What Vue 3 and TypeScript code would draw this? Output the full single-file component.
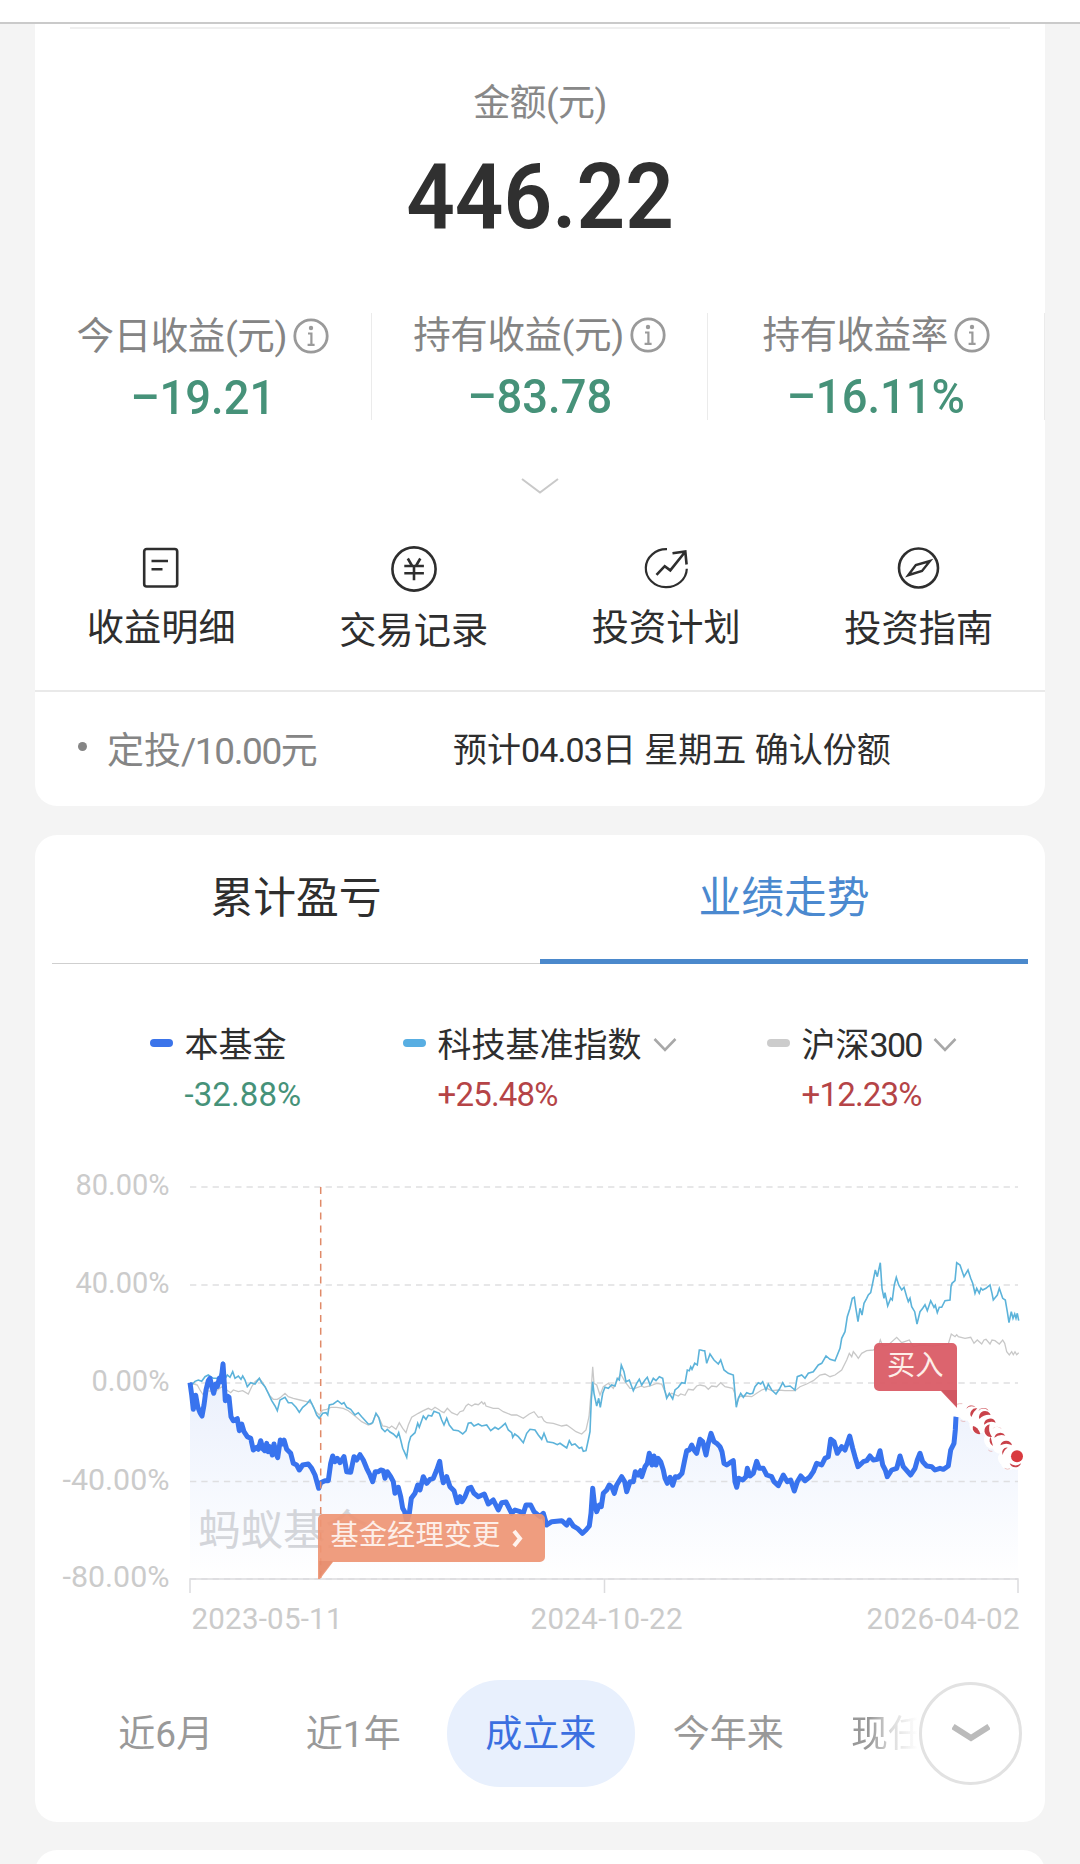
<script setup lang="ts">
import { ref } from 'vue'

interface Stat { label: string; value: string; shift: number }
interface Tool { label: string; icon: string; drop: number }
interface Legend { name: string; digits: string; change: string; color: string; tone: string; menu: boolean; left: number }
interface Segment { x: number; y: number; points: string }

const stats: Stat[] = [
  { label: '今日收益(元)', value: '–19.21', shift: 0 },
  { label: '持有收益(元)', value: '–83.78', shift: -1 },
  { label: '持有收益率', value: '–16.11%', shift: -1 },
]

const tools: Tool[] = [
  { label: '收益明细', icon: 'bill', drop: 0 },
  { label: '交易记录', icon: 'yen', drop: 3 },
  { label: '投资计划', icon: 'plan', drop: 0 },
  { label: '投资指南', icon: 'guide', drop: 1 },
]

const tabs = ['累计盈亏', '业绩走势']
const activeTab = ref(1)

const legends: Legend[] = [
  { name: '本基金', digits: '', change: '-32.88%', color: '#3b74ea', tone: 'down', menu: false, left: 115 },
  { name: '科技基准指数', digits: '', change: '+25.48%', color: '#58aee2', tone: 'up', menu: true, left: 368 },
  { name: '沪深', digits: '300', change: '+12.23%', color: '#cccccc', tone: 'up', menu: true, left: 732 },
]

const ranges = ['近6月', '近1年', '成立来', '今年来', '现任']
const activeRange = ref(2)

const axis = [
  { label: '80.00%', y: 1187, width: 94 },
  { label: '40.00%', y: 1285, width: 94 },
  { label: '0.00%', y: 1383, width: 78 },
  { label: '-40.00%', y: 1481.5, width: 107 },
  { label: '-80.00%', y: 1579, width: 107 },
]

// Series points are in thirds of a pixel, relative to each segment's origin.
const fund: Segment[] = [
  { x: 120, y: 3480, points: '450,668 455,705 460,748 467,706 473,740 480,758 486,768 492,735 498,690 505,662 510,655 516,682 521,700 527,672 532,680 538,655 543,665 549,612 553,670 556,722 562,708 567,712 573,770 580,782 592,776 598,812 605,792 612,815 622,830 632,835 640,870 650,862 655,868 662,842 668,866 674,872 680,850 684,875 690,860 697,885 702,852 708,880 713,893 721,840 727,852 732,840 740,868 752,880 760,910 770,915 778,930 788,915 805,912 815,925 825,945 836,985 842,968 855,962 865,962 872,910 878,888 885,905 892,895 900,908 912,890 920,935 932,937 942,890 950,900 960,884 970,900 980,925 990,945 998,965 1006,935' },
  { x: 1110, y: 3900, points: '25,515 32,510 40,512 45,535 52,515 62,530 70,545 75,580 85,562 92,590 98,625 104,635 110,665 118,640 124,595 135,580 143,555 150,570 160,530 170,550 180,538 190,535 200,510 209,484 214,520 220,548 230,530 240,560 252,572 262,608 270,590 276,605 285,590 295,565 303,562 312,580 325,590 343,582 355,612 370,600 385,630 395,608 408,606 425,640 435,630 450,635 460,640 468,615 482,615 492,635 510,650 520,640 530,675 545,665 575,662 590,675 598,660 610,678 622,685 637,700 648,690 658,678 663,640 668,565 673,610 680,635 688,615 694,620 700,580 710,570 718,555 726,562 733,580 740,555 755,530 764,545 770,575 780,545 790,545 796,515 805,525 812,512 815,530 825,500 832,490 838,460 846,495 852,468 858,495 864,475 872,485 880,510 885,535 892,550 900,532 908,556 916,530 925,532 936,520 944,480 950,452 958,450 965,435 972,450 980,460 990,418 998,425 1008,465 1015,430' },
  { x: 2100, y: 3660, points: '33,640 42,665 50,670 60,680 66,695 72,730 80,735 90,728 100,722 105,785 110,802 116,775 128,780 138,770 142,745 150,768 160,760 170,724 178,745 190,745 200,765 215,770 222,785 235,797 250,765 262,785 272,780 283,813 292,785 302,768 315,782 330,770 340,755 350,730 365,735 375,715 385,710 392,658 402,665 412,700 425,680 435,690 449,648 458,685 465,710 474,740 490,725 500,722 510,708 520,720 532,718 540,692 548,735 556,750 562,770 575,750 590,745 600,708 610,740 632,765 645,745 652,720 660,700 668,725 680,738 695,740 705,750 720,745 730,748 745,738 752,690 762,670 766,630 768,590' },
]

const benchmark: Segment[] = [
  { x: 120, y: 3480, points: '450,668 458,672 465,664 475,660 485,664 495,650 505,645 520,655 535,655 542,640 549,605 556,655 562,645 570,652 578,635 585,655 595,648 603,658 608,648 615,660 622,680 632,668 645,672 658,655 665,668 675,680 685,700 695,722 705,738 712,752 720,720 735,712 745,728 755,728 768,742 778,757 788,742 800,732 810,720 822,745 830,765 838,775 848,760 858,758 863,765 868,735 880,732 893,722 905,732 912,728 920,742 932,748 945,765 955,758 965,770 985,792' },
  { x: 1110, y: 3900, points: '0,372 8,368 18,340 26,352 35,385 45,395 52,388 60,396 70,402 80,412 86,398 92,420 98,445 104,458 110,472 116,430 122,410 135,398 143,370 148,382 160,348 168,358 175,346 185,348 192,334 208,340 215,360 222,375 230,355 238,375 250,390 265,392 278,402 288,392 295,370 303,368 312,378 325,372 335,378 350,375 362,392 375,382 385,388 395,380 406,370 415,390 425,398 428,412 434,402 445,410 460,428 470,400 480,388 495,390 505,405 515,418 522,400 532,425 550,428 562,434 570,430 590,444 598,422 605,435 615,432 628,445 635,442 640,454 648,452 655,420 660,395 664,300 668,245 672,280 680,318 686,295 691,322 698,280 705,262 715,265 725,255 735,258 742,235 748,240 754,195 762,215 768,245 778,240 790,272 800,250 808,238 815,255 825,240 832,232 840,255 850,235 858,242 868,230 878,235 884,270 890,295 898,280 908,297 915,270 925,262 935,248 945,250 952,210 958,212 962,200 966,208 974,190 982,195 988,150' },
  { x: 2100, y: 3660, points: '2,390 10,392 14,392 20,430 30,402 42,420 55,432 62,420 72,450 85,460 100,465 104,510 109,562 115,535 122,520 130,532 140,518 150,522 158,520 165,500 175,488 182,492 188,485 198,510 205,492 215,510 228,522 238,508 248,488 255,500 270,498 285,510 292,470 305,465 315,475 325,460 340,455 355,435 365,430 378,408 390,418 405,422 420,385 425,355 435,335 442,290 450,265 457,235 463,232 467,262 474,305 480,265 486,285 492,250 500,235 505,225 512,218 520,180 526,150 532,170 541,128 546,205 552,235 555,218 563,258 572,235 577,240 583,195 589,172 596,195 605,210 612,202 620,230 625,245 630,235 635,260 644,275 651,312 660,275 668,265 675,254 682,272 692,242 702,262 706,256 712,278 718,262 725,262 735,242 750,240 753,200 756,190 765,182 770,128 780,135 792,170 804,150 812,175 818,190 825,220 830,205 838,220 843,205 848,210 858,205 870,195 876,220 880,240 892,225 898,205 908,235 916,240 922,275 927,308 934,275 939,295 944,282 948,295 952,280 956,302' },
]

const csi300: Segment[] = [
  { x: 120, y: 3480, points: '450,668 460,672 472,675 480,690 490,705 500,692 525,695 545,680 560,690 572,698 580,690 595,695 608,692 625,702 635,680 645,665 658,655 668,668 680,690 690,708 700,718 712,718 722,712 735,700 745,710 760,715 780,720 800,725 815,730 828,755 838,765 848,750 860,748 872,742 890,742 910,745 925,752 945,768 965,785 985,795' },
  { x: 1110, y: 3900, points: '5,372 18,342 28,355 38,378 50,380 58,384 65,378 78,388 88,368 98,385 108,398 115,375 125,352 145,340 160,332 175,325 185,330 195,322 205,328 215,335 222,338 232,325 245,338 262,345 270,335 280,332 288,318 295,312 305,318 315,312 325,314 335,305 340,312 344,308 348,318 370,325 385,325 400,335 425,345 440,345 460,355 478,342 492,335 505,352 515,350 522,362 530,368 550,370 575,378 590,375 600,382 618,395 635,402 648,390 657,350 663,280 668,200 672,250 680,255 690,285 700,260 715,250 730,265 742,240 752,222 765,245 780,265 795,265 815,258 822,262 840,258 860,250 875,252 885,275 892,290 905,280 925,288 932,282 945,286 955,268 970,270 980,258' },
  { x: 2100, y: 3660, points: '0,495 15,498 25,508 35,498 50,500 62,488 75,500 98,505 104,520 109,555 118,530 135,528 155,530 170,520 185,510 200,505 215,512 235,510 255,512 285,512 300,500 320,492 340,482 360,465 375,462 390,470 405,465 425,450 440,420 448,400 455,410 460,395 468,405 475,415 485,400 500,392 520,390 535,378 541,360 548,378 565,375 590,352 605,368 628,360 640,380 660,375 700,378 745,372 754,342 765,350 770,344 775,350 795,355 812,352 822,370 832,360 845,372 852,360 858,358 870,372 876,360 885,362 898,372 908,360 914,370 920,395 928,405 935,395 940,404 945,395 950,404 956,398' },
]

function trace(segments: Segment[]): string {
  return segments
    .flatMap((s) => s.points.split(' ').map((p) => {
      const [x, y] = p.split(',').map(Number)
      return `${((s.x + x) / 3).toFixed(1)},${((s.y + y) / 3).toFixed(1)}`
    }))
    .join(' ')
}

const fundLine = trace(fund)
const benchmarkLine = trace(benchmark)
const csiLine = trace(csi300)
const fundArea = `190,1579 ${fundLine} 980,1408 1018,1457 1018,1579`

// Purchase markers: white rings with the visible slivers of each stacked dot.
const halos = [[88, 92, 20], [108, 100, 22], [128, 92, 20], [132, 112, 22], [145, 134, 27], [163, 102, 21], [170, 128, 24], [182, 150, 24], [188, 180, 26], [204, 158, 25], [212, 195, 26], [230, 205, 24], [226, 235, 22], [236, 248, 23], [258, 245, 24]]

const crescents = [
  'M109 86A17 17 0 0 1 137 82Q121 74 109 86Z',
  'M124 111A17 17 0 0 1 142 85Q129 96 124 111Z',
  'M145 93A18 18 0 0 1 176 92Q159 79 145 93Z',
  'M148 117A18 18 0 0 1 182 105Q164 102 148 117Z',
  'M162 134A18 18 0 0 1 197 128Q178 121 162 134Z',
  'M187 147A18 18 0 0 1 216 148Q202 133 187 147Z',
  'M193 173A18 18 0 0 1 226 167Q208 161 193 173Z',
  'M211 196A18 18 0 0 1 246 196Q229 186 211 196Z',
  'M186 171A19 19 0 0 1 179 133Q173 152 186 171Z',
  'M151 162A19 19 0 0 1 129 138Q143 139 151 162Z',
  'M189 198A19 19 0 0 1 182 170Q185 184 189 198Z',
  'M218 225A15 15 0 0 1 233 203Q221 210 218 225Z',
  'M273 250A18 18 0 0 1 239 250Q257 263 273 250Z',
]
</script>

<template>
  <div class="page">
    <div class="topbar"></div>

    <section class="card holding">
      <div class="hairline"></div>
      <div class="amount-label">金额(元)</div>
      <div class="amount">446.22</div>

      <div class="stats">
        <div v-for="s in stats" :key="s.label" class="stat">
          <div class="stat-label" :style="{ marginTop: s.shift + 'px' }">
            <span>{{ s.label }}</span>
            <svg width="36" height="36" viewBox="0 0 36 36" fill="none">
              <circle cx="18" cy="18" r="16.200" stroke="#9a9a9a" stroke-width="2.800" />
              <circle cx="18" cy="10" r="2.200" fill="#9a9a9a" />
              <path d="M15 15.500h3.400v11M14.600 26.800h7" stroke="#9a9a9a" stroke-width="2.200" />
            </svg>
          </div>
          <div class="stat-value">{{ s.value }}</div>
        </div>
      </div>

      <svg class="more" width="40" height="20" viewBox="0 0 40 20" fill="none">
        <path d="M2 3l18 13.500L38 3" stroke="#c9c9c9" stroke-width="2" />
      </svg>

      <div class="tools">
        <div v-for="t in tools" :key="t.label" class="tool">
          <svg width="48" height="48" viewBox="0 0 48 48" fill="none" stroke="#2e2e2e" stroke-width="2.600">
            <template v-if="t.icon === 'bill'">
              <rect x="7.200" y="4" width="33" height="37.500" rx="2.500" />
              <path d="M14.500 16h16.500M14.500 24.300h11" />
            </template>
            <template v-else-if="t.icon === 'yen'">
              <circle cx="24" cy="24" r="21.600" />
              <path d="M17.800 13.500l4.700 8M30.300 13.500l-4.700 8M14.300 21h19.600M14.300 28.300h19.600M24 21.500v13.800" />
            </template>
            <template v-else-if="t.icon === 'plan'">
              <path d="M25 4.200a20.500 19 0 1 0 19.800 19.500" stroke-width="2.200" />
              <path d="M14.500 29.800l8.200-8.600 5.600 4.200L43 7M30.500 8.300L43.300 6.500l1.300 13" />
            </template>
            <template v-else>
              <circle cx="23.500" cy="23" r="19.500" />
              <path d="M13.200 30.200l7.600-10.200 14.200-4-8 10z" stroke-width="2.400" />
            </template>
          </svg>
          <span :style="{ marginTop: 12 + t.drop + 'px' }">{{ t.label }}</span>
        </div>
      </div>

      <div class="plan">
        <i class="bullet"></i>
        <span class="plan-name">定投<b>/10.00</b>元</span>
        <span class="plan-note">预计<b>04.03</b>日 星期五 确认份额</span>
      </div>
    </section>

    <section class="card trend">
      <div class="tabs">
        <div v-for="(t, i) in tabs" :key="t" class="tab" :class="{ active: i === activeTab }" @click="activeTab = i">{{ t }}</div>
      </div>

      <div class="legends">
        <div v-for="l in legends" :key="l.change" class="legend" :style="{ left: l.left + 'px' }">
          <i class="swatch" :style="{ background: l.color }"></i>
          <div>
            <div class="legend-name">
              <span>{{ l.name }}<b>{{ l.digits }}</b></span>
              <svg v-if="l.menu" width="24" height="18" viewBox="0 0 24 18" fill="none">
                <path d="M1.500 3L12 13.800 22.500 3" stroke="#a8a8a8" stroke-width="2.600" />
              </svg>
            </div>
            <div class="legend-change" :class="l.tone">{{ l.change }}</div>
          </div>
        </div>
      </div>

      <svg class="chart" width="1010" height="480" viewBox="35 1160 1010 480" fill="none">
        <defs>
          <linearGradient id="fundFill" gradientUnits="userSpaceOnUse" x1="0" y1="1383" x2="0" y2="1579">
            <stop offset="0" stop-color="#ebf0fc" />
            <stop offset="0.500" stop-color="#f5f8fe" />
            <stop offset="1" stop-color="#ffffff" />
          </linearGradient>
        </defs>

        <polygon :points="fundArea" fill="url(#fundFill)" />
        <g v-for="a in axis" :key="a.label">
          <path :d="`M190 ${a.y}H1018`" stroke="#dfdfe1" stroke-width="1.500" stroke-dasharray="6.300 5" />
          <text :x="169.500 - a.width" :y="a.y + 8.300" class="tick" :textLength="a.width" lengthAdjust="spacingAndGlyphs">{{ a.label }}</text>
        </g>
        <path d="M190 1593V1579H1018V1593M604.500 1579v14" stroke="#dcdcde" stroke-width="1.500" />
        <text x="198" y="1544.500" class="watermark">蚂蚁基金</text>

        <polyline :points="csiLine" stroke="#c8c8c8" stroke-width="1.300" />
        <polyline :points="benchmarkLine" stroke="#5cb3da" stroke-width="1.600" />
        <polyline :points="fundLine" stroke="#3873ee" stroke-width="5" stroke-linejoin="round" />
        <path d="M320.700 1187V1579" stroke="#e08a68" stroke-width="1.500" stroke-dasharray="7 5.800" />

        <g transform="translate(930 1380) scale(0.33333)">
          <circle v-for="(h, i) in halos" :key="i" :cx="h[0]" :cy="h[1]" :r="h[2]" fill="#fff" />
          <path d="M80 73q8-3 17-2M92 122q8 4 14 2M175 210q4 5 12 4M224 265q8 5 16 1" stroke="#e6b4b6" stroke-width="2.500" />
          <path v-for="c in crescents" :key="c" :d="c" fill="#c9424a" />
          <circle cx="261" cy="229" r="21" fill="#fff" />
          <circle cx="261" cy="229" r="18" fill="#d93a3f" />
        </g>

        <path d="M318 1519a5 5 0 0 1 5-5H540a5 5 0 0 1 5 5V1557a5 5 0 0 1-5 5H333L320 1579H318Z" fill="#ee9574" fill-opacity="0.920" />
        <path d="M319 1561h14l-14 17z" fill="#dc7c5c" fill-opacity="0.350" />
        <text x="330.500" y="1545" class="flag">基金经理变更</text>
        <path d="M514 1531l6 7.500-6 7.500" stroke="#fff3ee" stroke-width="4" />

        <path d="M957 1408L941 1391H879a5 5 0 0 1-5-5V1348a5 5 0 0 1 5-5H952a5 5 0 0 1 5 5Z" fill="#da5c66" fill-opacity="0.950" />
        <path d="M941 1390h16v17z" fill="#c04450" fill-opacity="0.400" />
        <text x="887" y="1374.500" class="flag">买入</text>

        <text x="191.500" y="1629" class="tick" textLength="151">2023-05-11</text>
        <text x="530.500" y="1629" class="tick" textLength="152">2024-10-22</text>
        <text x="866.500" y="1629" class="tick" textLength="153">2026-04-02</text>
      </svg>

      <div class="ranges">
        <div v-for="(r, i) in ranges" :key="r" class="range" :class="{ active: i === activeRange, faded: i === 4 }" @click="activeRange = i">{{ r }}</div>
        <button class="expand" aria-label="more ranges">
          <svg width="38" height="22" viewBox="0 0 38 22" fill="none">
            <path d="M1 3.500l18 11.500 18-11.500" stroke="#bbbbbb" stroke-width="6" />
          </svg>
        </button>
      </div>
    </section>

    <section class="card next"></section>
  </div>
</template>

<style>
body {
  background: #f4f4f4;
}
</style>

<style scoped>
.page {
  width: 1080px;
  height: 1864px;
  overflow: hidden;
  background: #f4f4f4;
  font-family: Roboto, 'Noto Sans CJK SC', sans-serif;
  color: #2e2e2e;
  white-space: nowrap;
}
.page b {
  font-weight: 400;
}
.topbar {
  height: 22px;
  box-sizing: content-box;
  background: #fff;
  border-bottom: 2px solid #cacaca;
}
.card {
  width: 1010px;
  margin: 0 auto;
  background: #fff;
  overflow: hidden;
}
.holding {
  height: 782px;
  border-radius: 0 0 22px 22px;
}
.hairline {
  height: 2px;
  margin: 3px 35px 0;
  background: #efefef;
}
.amount-label {
  margin-top: 50px;
  height: 50px;
  line-height: 50px;
  text-align: center;
  font-size: 37px;
  letter-spacing: -0.6px;
  color: #888;
}
.amount {
  margin-top: 29px;
  height: 80px;
  line-height: 80px;
  text-align: center;
  font-size: 90px;
  font-weight: 600;
  transform: scaleX(0.947);
  color: #303030;
}
.stats {
  display: flex;
  margin-top: 75px;
  height: 107px;
}
.stat {
  width: 337px;
  box-sizing: border-box;
  border-right: 1.5px solid #ebebeb;
}
.stat-label {
  display: flex;
  align-items: center;
  justify-content: center;
  gap: 6px;
  height: 46px;
  line-height: 46px;
  font-size: 37.5px;
  letter-spacing: -0.4px;
  color: #848484;
}
.stat-value {
  margin-top: 14px;
  height: 50px;
  line-height: 50px;
  text-align: center;
  font-size: 49px;
  font-weight: 500;
  transform: scaleX(0.925);
  color: #469279;
}
.more {
  display: block;
  margin: 56px auto 0;
}
.tools {
  display: flex;
  margin-top: 49px;
  height: 145px;
  border-bottom: 2px solid #e9e9e9;
}
.tool {
  flex: 1;
  display: flex;
  flex-direction: column;
  align-items: center;
  font-size: 37.2px;
  line-height: 46px;
}
.plan {
  display: flex;
  align-items: center;
  height: 111px;
}
.bullet {
  width: 9px;
  height: 9px;
  margin: -2px 0 0 43px;
  border-radius: 50%;
  background: #858585;
}
.plan-name {
  width: 346px;
  margin-left: 20px;
  font-size: 37px;
  color: #858585;
}
.plan-name b {
  letter-spacing: -1.4px;
}
.plan-note {
  font-size: 34px;
}
.plan-note b {
  letter-spacing: -0.9px;
}
.trend {
  height: 987px;
  margin-top: 29px;
  border-radius: 22px;
}
.tabs {
  display: flex;
  margin: 0 17px;
  height: 129px;
}
.tab {
  flex: 1;
  box-sizing: border-box;
  padding-top: 33px;
  line-height: 60px;
  text-align: center;
  font-size: 42.8px;
  border-bottom: 1.5px solid #cfcfcf;
}
.tab.active {
  color: #4b89cf;
  border-bottom: 5px solid #4b89cc;
}
.legends {
  position: relative;
  height: 196px;
}
.legend {
  position: absolute;
  top: 57px;
  display: flex;
  gap: 11.5px;
}
.swatch {
  width: 23px;
  height: 8px;
  margin-top: 18px;
  border-radius: 4px;
}
.legend-name {
  display: flex;
  align-items: center;
  gap: 11px;
  height: 48px;
  line-height: 48px;
  font-size: 34px;
}
.legend-name b {
  letter-spacing: -1.7px;
}
.legend-change {
  height: 52px;
  line-height: 52px;
  font-size: 33px;
  letter-spacing: -0.8px;
}
.down {
  color: #469279;
  letter-spacing: 0.1px;
}
.up {
  color: #b54447;
}
.chart {
  display: block;
}
.tick {
  font-size: 29.5px;
  fill: #cbcbcb;
}
.watermark {
  font-size: 42.5px;
  fill: #d3d5da;
}
.flag {
  font-size: 28.3px;
  fill: #fdeee8;
}
.ranges {
  position: relative;
  display: flex;
  align-items: center;
  height: 107px;
  margin-top: 40px;
  padding-left: 37px;
}
.range {
  width: 187.5px;
  height: 107px;
  flex: none;
  line-height: 110px;
  text-align: center;
  font-size: 37px;
  color: #999;
}
.range.active {
  border-radius: 53px;
  background: #e8f0fd;
  color: #3b6fe0;
}
.range.faded {
  width: 74px;
  margin-left: 29px;
  background: linear-gradient(90deg, #999 25%, rgba(153, 153, 153, 0.35) 55%, rgba(153, 153, 153, 0) 90%);
  background-clip: text;
  -webkit-background-clip: text;
  color: transparent;
}
.expand {
  position: absolute;
  left: 884px;
  top: 2px;
  width: 103px;
  height: 103px;
  padding: 0;
  border: 3px solid #e2e2e2;
  border-radius: 50%;
  background: #fff;
  display: flex;
  align-items: center;
  justify-content: center;
}
.next {
  height: 40px;
  margin-top: 28px;
  border-radius: 22px 22px 0 0;
}
</style>
